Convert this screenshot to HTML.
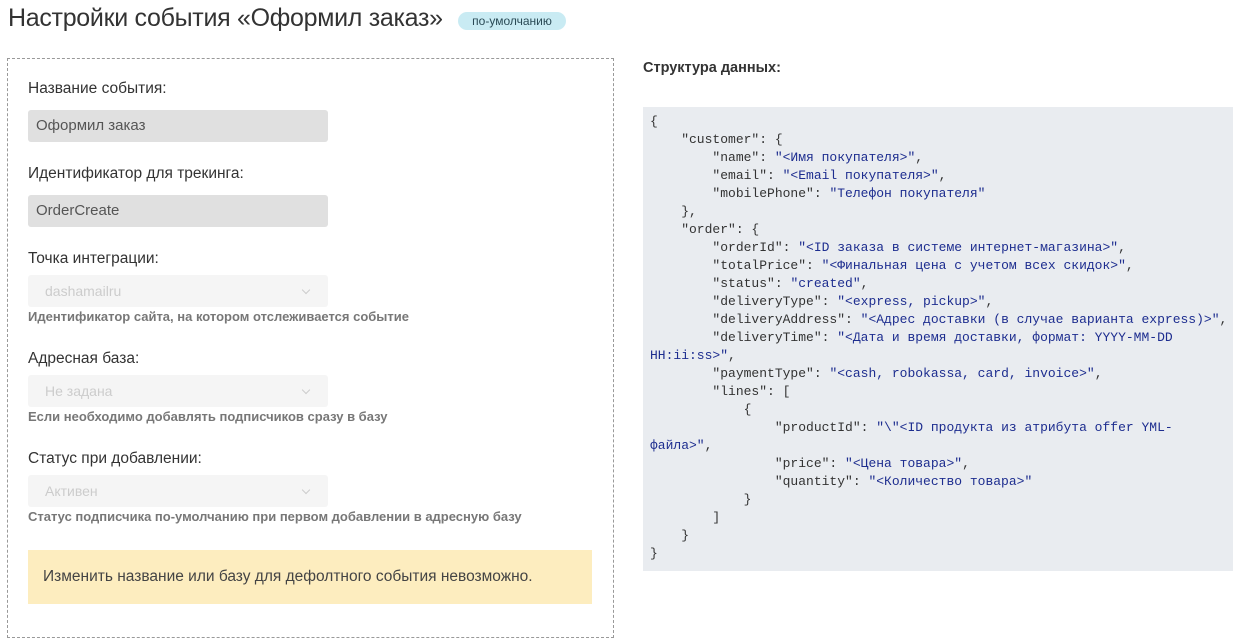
<!DOCTYPE html>
<html><head><meta charset="utf-8"><style>
*{margin:0;padding:0;box-sizing:border-box}
body{width:1242px;height:640px;background:#fff;font-family:"Liberation Sans","DejaVu Sans",sans-serif;color:#333;position:relative;overflow:hidden}
.a{position:absolute;white-space:nowrap}
h1{position:absolute;left:8px;top:4px;font-size:25px;font-weight:normal;color:#333;letter-spacing:-0.3px}
.badge{position:absolute;left:458px;top:12px;width:108px;height:18px;border-radius:9px;background:#c9ebf3;font-size:12px;line-height:18px;text-align:center;color:#2a4a55}
.box{position:absolute;left:7px;top:58px;width:607px;height:580px;border:1px dashed #999}
.lbl{font-size:15.5px;color:#333;font-weight:500}
.inp{position:absolute;left:28px;width:300px;height:32px;border-radius:3px;background:#e0e0e0;font-size:15px;line-height:32px;padding-left:8px;color:#555}
.sel{position:absolute;left:28px;width:300px;height:32px;border-radius:3px;background:#f5f5f5;font-size:14px;line-height:32px;padding-left:17px;color:#ccc}
.sel:after{content:"";position:absolute;right:19px;top:12px;width:5px;height:5px;border-right:1px solid #ccc;border-bottom:1px solid #ccc;transform:rotate(45deg)}
.help{font-size:13px;color:#777;font-weight:bold}
.alert{position:absolute;left:28px;top:550px;width:564px;height:54px;background:#fdedbf;font-size:15.5px;line-height:54px;padding-left:15px;color:#444}
.code{position:absolute;left:643px;top:107px;width:590px;height:464px;background:#e9ecf0;padding:6px 0 0 7px;font-family:"Liberation Mono","DejaVu Sans Mono",monospace;font-size:13px;line-height:18px;color:#333;white-space:pre}
.s{color:#1d2d8f}
</style></head><body>
<h1>Настройки события «Оформил заказ»</h1>
<div class="badge">по-умолчанию</div>
<div class="box"></div>
<div class="a lbl" style="left:28px;top:80px">Название события:</div>
<div class="inp" style="top:110px">Оформил заказ</div>
<div class="a lbl" style="left:28px;top:165px">Идентификатор для трекинга:</div>
<div class="inp" style="top:195px">OrderCreate</div>
<div class="a lbl" style="left:28px;top:250px">Точка интеграции:</div>
<div class="sel" style="top:275px">dashamailru</div>
<div class="a help" style="left:28px;top:309px">Идентификатор сайта, на котором отслеживается событие</div>
<div class="a lbl" style="left:28px;top:350px">Адресная база:</div>
<div class="sel" style="top:375px">Не задана</div>
<div class="a help" style="left:28px;top:409px">Если необходимо добавлять подписчиков сразу в базу</div>
<div class="a lbl" style="left:28px;top:450px">Статус при добавлении:</div>
<div class="sel" style="top:475px">Активен</div>
<div class="a help" style="left:28px;top:509px">Статус подписчика по-умолчанию при первом добавлении в адресную базу</div>
<div class="alert">Изменить название или базу для дефолтного события невозможно.</div>
<div class="a lbl" style="left:643px;top:60px;font-weight:bold;font-size:14.5px">Структура данных:</div>
<div class="code">{
    "customer": {
        "name": <span class="s">"&lt;Имя покупателя&gt;"</span>,
        "email": <span class="s">"&lt;Email покупателя&gt;"</span>,
        "mobilePhone": <span class="s">"Телефон покупателя"</span>
    },
    "order": {
        "orderId": <span class="s">"&lt;ID заказа в системе интернет-магазина&gt;"</span>,
        "totalPrice": <span class="s">"&lt;Финальная цена с учетом всех скидок&gt;"</span>,
        "status": <span class="s">"created"</span>,
        "deliveryType": <span class="s">"&lt;express, pickup&gt;"</span>,
        "deliveryAddress": <span class="s">"&lt;Адрес доставки (в случае варианта express)&gt;"</span>,
        "deliveryTime": <span class="s">"&lt;Дата и время доставки, формат: YYYY-MM-DD
HH:ii:ss&gt;"</span>,
        "paymentType": <span class="s">"&lt;cash, robokassa, card, invoice&gt;"</span>,
        "lines": [
            {
                "productId": <span class="s">"\"&lt;ID продукта из атрибута offer YML-
файла&gt;"</span>,
                "price": <span class="s">"&lt;Цена товара&gt;"</span>,
                "quantity": <span class="s">"&lt;Количество товара&gt;"</span>
            }
        ]
    }
}</div>
</body></html>
